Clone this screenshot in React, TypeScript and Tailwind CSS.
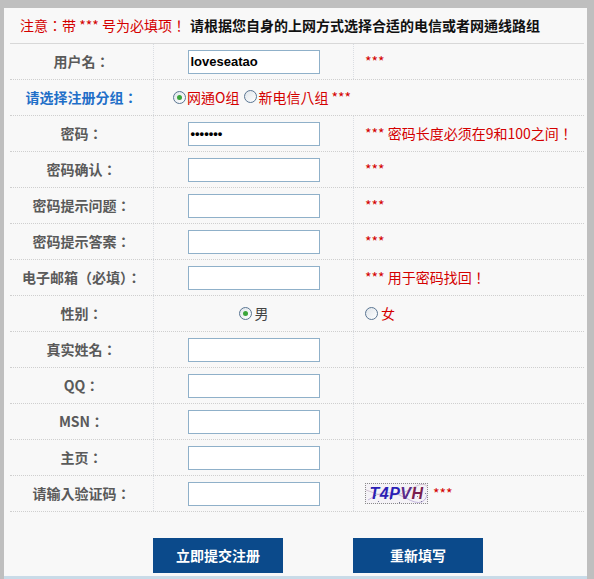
import React from "react";

const FONT = "font-['Noto_Sans_CJK_TC','Noto_Sans_CJK_SC','Liberation_Sans',sans-serif]";

function Radio({ checked }: { checked?: boolean }) {
  return (
    <span className="inline-flex h-[13px] w-[13px] shrink-0 items-center justify-center rounded-full border border-[#5a7592] bg-gradient-to-br from-[#dfe5ea] to-white">
      {checked && <span className="h-[5px] w-[5px] rounded-full bg-[#3aa53a]" />}
    </span>
  );
}

function TextBox({ value, bold }: { value?: string; bold?: boolean }) {
  return (
    <div
      className={`flex h-[24px] w-[132px] items-center border border-[#8fb0c9] bg-white px-[2px] text-[13px] text-black ${
        bold ? "font-bold font-['Liberation_Sans',sans-serif]" : ""
      }`}
    >
      {value}
    </div>
  );
}

function Row({
  label,
  input,
  note,
}: {
  label: string;
  input: React.ReactNode;
  note?: React.ReactNode;
}) {
  return (
    <div className="flex h-[36px] border-b border-dotted border-[#cfcfcf]">
      <div className="flex w-[143px] items-center justify-center text-[14px] font-bold text-[#5a5a5a]">
        {label}
      </div>
      <div className="flex w-[200px] items-center justify-center border-l border-dotted border-[#dadde2]">
        {input}
      </div>
      <div className="flex flex-1 items-center border-l border-dotted border-[#dadde2] pl-[11px] text-[14px] text-[#d40000]">
        {note}
      </div>
    </div>
  );
}

function Captcha() {
  return (
    <div className="relative flex h-[21px] w-[63px] items-center justify-center overflow-hidden border border-dotted border-[#8a8a8a] bg-[#f4f2f6]">
      <svg className="absolute inset-0" width="63" height="21" viewBox="0 0 63 21">
        <path d="M2 16 Q 20 2 40 14 T 62 6" stroke="#b9a8d8" fill="none" strokeWidth="0.8" />
        <path d="M0 6 Q 25 18 45 5 T 63 15" stroke="#c9b9c9" fill="none" strokeWidth="0.8" />
        {[
          [5, 4], [12, 17], [20, 9], [28, 3], [33, 18], [41, 11], [48, 4], [55, 17], [59, 9], [9, 11], [24, 15], [37, 7], [51, 12],
        ].map(([x, y], i) => (
          <rect key={i} x={x} y={y} width="1" height="1" fill="#7a7a9a" />
        ))}
      </svg>
      <span className="relative text-[16px] font-bold italic tracking-[0.5px] font-['Liberation_Sans',sans-serif]">
        <span className="text-[#2b1fb5]">T4P</span>
        <span className="text-[#5a2a8a]">V</span>
        <span className="text-[#7a1f4f]">H</span>
      </span>
    </div>
  );
}

export default function App() {
  return (
    <div className={`h-[579px] w-[594px] bg-[#bfbfbf] pt-[8px] pl-[4px] ${FONT}`}>
      <div className="flex h-[571px] w-[583px] flex-col bg-[#f8f8f8]">
        <div className="ml-[6px] w-[574px] flex-1">
          {/* 提示 */}
          <div className="flex h-[36px] items-center border-b border-[#d8d8d8] pl-[10px] text-[14px]">
            <span className="text-[#d40000]">注意：带 *** 号为必填项！</span>
            <span className="ml-[4px] font-bold text-[#111]">
              请根据您自身的上网方式选择合适的电信或者网通线路组
            </span>
          </div>

          <Row label="用户名：" input={<TextBox value="loveseatao" bold />} note="***" />

          {/* 分组 */}
          <div className="flex h-[36px] border-b border-dotted border-[#cfcfcf]">
            <div className="flex w-[143px] items-center justify-center text-[14px] font-bold text-[#1f6fc8]">
              请选择注册分组：
            </div>
            <div className="flex flex-1 items-center border-l border-dotted border-[#dadde2] pl-[19px] text-[14px] text-[#d40000]">
              <Radio checked />
              <span className="ml-[1px]">网通O组</span>
              <span className="ml-[5px]">
                <Radio />
              </span>
              <span className="ml-[1px]">新电信八组 ***</span>
            </div>
          </div>

          <Row
            label="密码："
            input={<TextBox value="•••••••" bold />}
            note="*** 密码长度必须在9和100之间！"
          />
          <Row label="密码确认：" input={<TextBox />} note="***" />
          <Row label="密码提示问题：" input={<TextBox />} note="***" />
          <Row label="密码提示答案：" input={<TextBox />} note="***" />
          <Row label="电子邮箱（必填）：" input={<TextBox />} note="*** 用于密码找回！" />
          <Row
            label="性别："
            input={
              <div className="flex items-center gap-[3px] text-[14px] text-[#444]">
                <Radio checked />
                <span>男</span>
              </div>
            }
            note={
              <div className="flex items-center gap-[3px]">
                <Radio />
                <span>女</span>
              </div>
            }
          />
          <Row label="真实姓名：" input={<TextBox />} />
          <Row label="QQ：" input={<TextBox />} />
          <Row label="MSN：" input={<TextBox />} />
          <Row label="主页：" input={<TextBox />} />
          <Row
            label="请输入验证码："
            input={<TextBox />}
            note={
              <div className="flex items-center gap-[5px]">
                <Captcha />
                <span>***</span>
              </div>
            }
          />

          {/* 按钮 */}
          <div className="flex pt-[26px]">
            <div className="w-[143px]" />
            <button className="h-[35px] w-[130px] bg-[#0b4a8b] text-[14px] font-bold text-white">
              立即提交注册
            </button>
            <button className="ml-[70px] h-[35px] w-[130px] bg-[#0b4a8b] text-[14px] font-bold text-white">
              重新填写
            </button>
          </div>
        </div>
        <div className="h-[3px] bg-[#c9dbe8]" />
      </div>
    </div>
  );
}
